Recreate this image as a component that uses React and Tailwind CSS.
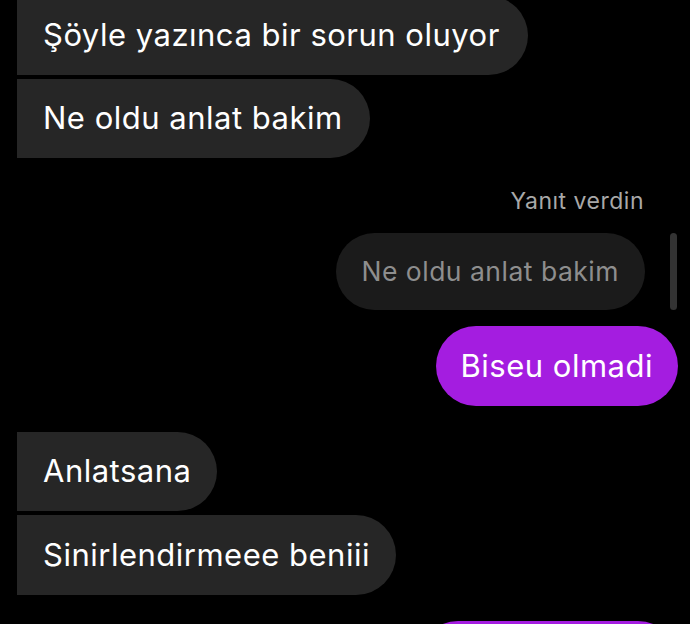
export default function App() {
  const font = { fontFamily: 'Inter, "Noto Sans", sans-serif' };
  return (
    <div className="w-[690px] h-[624px] bg-black overflow-hidden flex flex-col" style={font}>
      <div className="flex flex-col items-start gap-[4px] pl-[17px] mt-[-4px]">
        <div className="h-[79px] flex items-center pl-[26px] pr-[28px] bg-[#262626] text-white text-[31px] tracking-[0.5px] rounded-tl-[40px] rounded-bl-[6px] rounded-r-full">
          Şöyle yazınca bir sorun oluyor
        </div>
        <div className="h-[79px] flex items-center pl-[26px] pr-[27px] bg-[#262626] text-white text-[31px] tracking-[0.5px] rounded-tl-[6px] rounded-bl-[40px] rounded-r-full">
          Ne oldu anlat bakim
        </div>
      </div>

      <div className="flex justify-end pr-[46px] mt-[28px] h-[30px] items-center text-[23px] tracking-[0.5px] text-[#a8a8a8]">
        Yanıt verdin
      </div>

      <div className="flex justify-end items-stretch mt-[17px] pr-[13px] gap-[25px]">
        <div className="h-[77px] flex items-center pl-[25px] pr-[26px] bg-[#1b1b1b] text-[#8e8e8e] text-[26.5px] tracking-[0.5px] rounded-full">
          Ne oldu anlat bakim
        </div>
        <div className="w-[7px] bg-[#333333] rounded-full"></div>
      </div>

      <div className="flex justify-end mt-[16px] pr-[12px]">
        <div className="h-[80px] flex items-center px-[25px] bg-[#a41de0] text-white text-[31px] tracking-[0.5px] rounded-full">
          Biseu olmadi
        </div>
      </div>

      <div className="flex flex-col items-start gap-[4px] pl-[17px] mt-[26px]">
        <div className="h-[79px] flex items-center pl-[26px] pr-[26px] bg-[#262626] text-white text-[31px] tracking-[0.5px] rounded-tl-[40px] rounded-bl-[6px] rounded-r-full">
          Anlatsana
        </div>
        <div className="h-[80px] flex items-center pl-[26px] pr-[26px] bg-[#262626] text-white text-[31px] tracking-[0.5px] rounded-tl-[6px] rounded-bl-[40px] rounded-r-full">
          Sinirlendirmeee beniii
        </div>
      </div>

      <div className="flex justify-end mt-[26px] pr-[12px]">
        <div className="h-[80px] w-[260px] bg-[#a41de0] rounded-full shrink-0"></div>
      </div>
    </div>
  );
}
